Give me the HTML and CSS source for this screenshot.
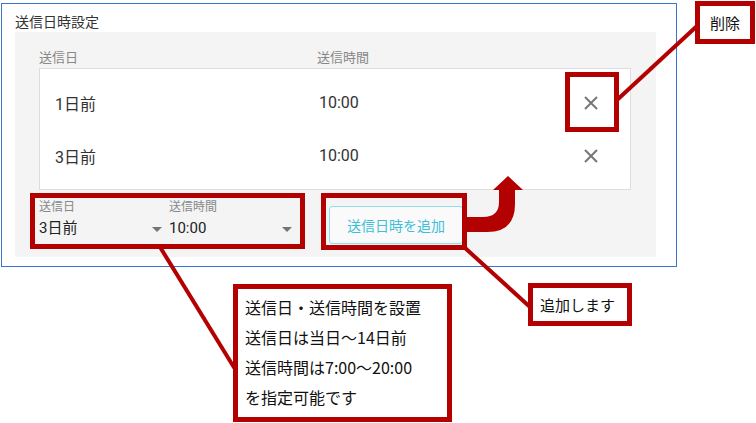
FILE: index.html
```html
<!DOCTYPE html>
<html lang="ja">
<head>
<meta charset="utf-8">
<link rel="stylesheet" href="styles.css">
</head>
<body>
<div class="page">
  <section class="card">
    <h2 class="card-title">送信日時設定</h2>
    <div class="panel">
      <div class="list-head">
        <span>送信日</span>
        <span>送信時間</span>
      </div>
      <div class="list">
        <div class="row">
          <span>1日前</span>
          <span>10:00</span>
          <svg class="del" viewBox="0 0 14 14"><path d="M1 1L13 13M13 1L1 13"/></svg>
        </div>
        <div class="row">
          <span>3日前</span>
          <span>10:00</span>
          <svg class="del" viewBox="0 0 14 14"><path d="M1 1L13 13M13 1L1 13"/></svg>
        </div>
      </div>
      <div class="add-row">
        <div class="fields">
          <div class="field f1">
            <div class="f-label">送信日</div>
            <div class="f-value">3日前</div>
            <span class="caret"></span>
          </div>
          <div class="field f2">
            <div class="f-label">送信時間</div>
            <div class="f-value">10:00</div>
            <span class="caret"></span>
          </div>
        </div>
        <button class="add-btn">送信日時を追加</button>
      </div>
    </div>
  </section>

  <svg class="lines" width="756" height="423" viewBox="0 0 756 423">
    <line x1="697" y1="26" x2="617" y2="100"/>
    <line x1="160" y1="247" x2="235" y2="369"/>
    <line x1="464" y1="247" x2="530" y2="307"/>
  </svg>
  <svg class="arrow" width="60" height="60" viewBox="0 0 60 60">
    <path d="M0 43 L18 43 Q34 43 34 28 L34 16 L28 16 L43 2 L58 16 L50 16 L50 30 Q50 58 22 58 L0 58 Z"/>
  </svg>

  <div class="mark mark-x"></div>
  <div class="mark mark-form"></div>
  <div class="mark mark-btn"></div>
  <div class="note note-del">削除</div>
  <div class="note note-add">追加します</div>
  <div class="note note-info">
    <p>送信日・送信時間を設置</p>
    <p>送信日は当日〜14日前</p>
    <p>送信時間は7:00〜20:00</p>
    <p>を指定可能です</p>
  </div>
</div>
</body>
</html>
```

FILE: styles.css
```css
* { box-sizing: border-box; }
html, body { margin: 0; padding: 0; background: #fff; }
body {
  font-family: Roboto, "Noto Sans CJK JP", sans-serif;
  color: #333;
}
.page {
  position: relative;
  width: 756px;
  height: 423px;
  padding: 3px 0 0 1px;
  overflow: hidden;
}
.card {
  width: 676px;
  height: 264px;
  border: 1px solid #3b74cc;
  padding: 8px 0 8px 13px;
}
.card-title {
  margin: 0;
  font-size: 14px;
  font-weight: normal;
  line-height: 20px;
  color: #333;
}
.panel {
  width: 641px;
  height: 225px;
  background: #f4f4f4;
  padding: 17px 24px 0 24px;
}
.list-head {
  display: grid;
  grid-template-columns: 278px 1fr;
  font-size: 13px;
  line-height: 18px;
  color: #888;
  margin-bottom: 1px;
}
.list {
  background: #fff;
  border: 1px solid #ddd;
  width: 592px;
  padding: 7px 0;
}
.row {
  display: grid;
  grid-template-columns: 263px 1fr 14px;
  align-items: center;
  height: 53px;
  padding: 0 32px 0 15px;
  font-size: 16px;
  color: #333;
}
.row span:first-child { margin-left: 0; }
.row span:nth-child(2) { margin-left: 1px; }
.del {
  width: 14px;
  height: 14px;
  stroke: #777;
  stroke-width: 2;
  fill: none;
}
.add-row {
  display: flex;
  align-items: flex-start;
  margin-top: 10px;
}
.fields {
  display: flex;
  width: 259px;
  border-bottom: 1px solid #999;
}
.field {
  position: relative;
  height: 44px;
}
.f1 { width: 130px; }
.f2 { width: 129px; }
.f-label {
  font-size: 12px;
  line-height: 14px;
  color: #888;
}
.f-value {
  margin-top: 2px;
  font-size: 15px;
  line-height: 24px;
  color: #222;
}
.caret {
  position: absolute;
  top: 27px;
  width: 0;
  height: 0;
  border-left: 5px solid transparent;
  border-right: 5px solid transparent;
  border-top: 5px solid #757575;
}
.f1 .caret { left: 113px; }
.f2 .caret { left: 113px; }
.add-btn {
  margin: 6px 0 0 31px;
  width: 134px;
  height: 38px;
  border: 1px solid #8fdfec;
  border-radius: 3px;
  background: #fafafa;
  color: #3dbfd9;
  font-family: "Noto Sans CJK JP", sans-serif;
  font-size: 14px;
  padding: 0;
}

/* annotations */
.lines {
  position: absolute;
  left: 0;
  top: 0;
  stroke: #b30000;
  stroke-width: 4;
}
.arrow {
  position: absolute;
  left: 465px;
  top: 174px;
  fill: #b30000;
}
.mark {
  position: absolute;
  border: 5px solid #b30000;
}
.mark-x { left: 565px; top: 72px; width: 54px; height: 60px; }
.mark-form { left: 30px; top: 193px; width: 275px; height: 56px; }
.mark-btn { left: 321px; top: 193px; width: 146px; height: 57px; }
.note {
  position: absolute;
  border: 5px solid #b30000;
  background: #fff;
  color: #111;
  font-family: "Noto Sans CJK JP", sans-serif;
}
.note-del {
  left: 695px; top: 1px; width: 60px; height: 43px;
  display: flex; align-items: center; justify-content: center;
  font-size: 15px;
}
.note-add {
  left: 528px; top: 283px; width: 104px; height: 43px;
  display: flex; align-items: center;
  padding-left: 7px;
  font-size: 15px;
}
.note-info {
  left: 233px; top: 284px; width: 219px; height: 138px;
  padding: 3px 0 0 7px;
  font-size: 16px;
}
.note-info p {
  margin: 0;
  line-height: 30px;
  white-space: nowrap;
}
```
